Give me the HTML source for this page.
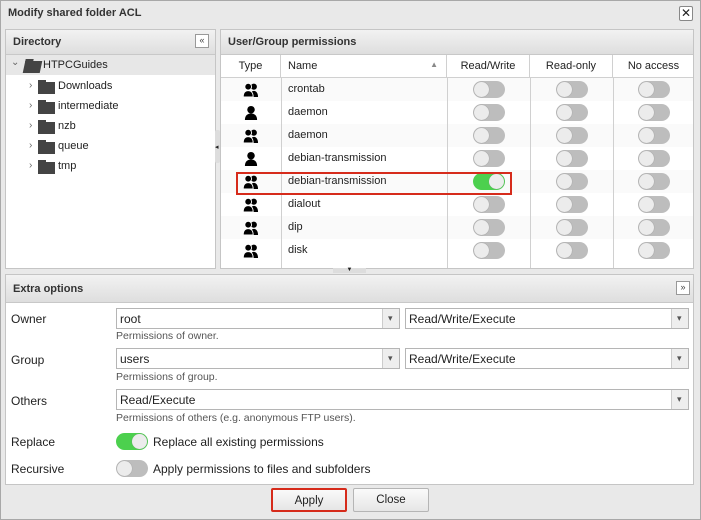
<!DOCTYPE html>
<html><head><meta charset="utf-8"><style>
*{box-sizing:border-box;margin:0;padding:0}
body{width:701px;height:520px;background:#e6e6e6;font-family:"Liberation Sans",sans-serif;font-size:11px;color:#222;position:relative;overflow:hidden}
.a{position:absolute}
.win{left:0;top:0;width:701px;height:520px;border:1px solid #a8a8a8;background:#e9e9e9}
.panel{background:#fff;border:1px solid #c5c5c5}
.ph{position:absolute;left:0;right:0;top:0;height:25px;background:linear-gradient(#f2f2f2,#dedede);border-bottom:1px solid #c8c8c8;font-weight:bold;font-size:11px;padding:6px 0 0 7px;color:#333}
.row{position:absolute;left:0;width:472px;height:23px}
.tg{position:absolute;width:32px;height:17px;border-radius:9px;background:#bdbdbd}
.tg::after{content:"";position:absolute;left:1px;top:1px;width:15px;height:15px;border-radius:50%;background:#ececec;box-shadow:0 0 1px #888}
.tg.on{background:#4cd04e}.tg.on::after{left:16px}
.sel{position:absolute;height:21px;border:1px solid #b5b5b5;background:#fff;padding:3px 0 0 3px;font-size:12px}
.sel::after{content:"";position:absolute;right:0;top:0;width:16px;height:19px;border-left:1px solid #ccc;background:#eee}
.arr{position:absolute;right:4px;top:6px;width:7px;height:7px;z-index:2;font-size:9px;line-height:7px;color:#555}
.lbl{position:absolute;left:11px;font-size:12px}
.hint{position:absolute;left:116px;font-size:10.5px;color:#555}
.btn{position:absolute;top:488px;height:24px;width:76px;border:1px solid #b5b5b5;border-radius:2px;background:linear-gradient(#fafafa,#e6e6e6);text-align:center;padding-top:5px;font-size:11.5px}
.fold{position:absolute;width:17px;height:12px;background:#444}
.fold::before{content:"";position:absolute;left:0;top:-2px;width:8px;height:3px;background:#444}
.ch{position:absolute;left:23px;font-size:10px;color:#666}
.tx{position:absolute;left:52px;font-size:11px}
.th{position:absolute;top:0;height:22px;border-right:1px solid #d0d0d0;text-align:center;padding-top:5px;font-size:11px}
</style></head><body>
<div class="a win"></div>
<div class="a" style="left:8px;top:7px;font-weight:bold;font-size:11px;color:#333">Modify shared folder ACL</div>
<div class="a" style="left:679px;top:6px;width:14px;height:15px;border:1px solid #888;border-radius:2px;background:#fff;font-size:12px;line-height:12px;text-align:center">✕</div>

<!-- directory -->
<div class="a panel" style="left:5px;top:29px;width:211px;height:240px">
<div class="ph">Directory</div>
<div class="a" style="left:189px;top:4px;width:14px;height:14px;border:1px solid #999;background:#fff;font-size:9px;line-height:11px;text-align:center;color:#444">«</div>
<div class="a" style="left:0;top:25px;width:209px;height:20px;background:#e7e7e7"></div>
<div class="a" style="left:5px;top:27px;font-size:10px;color:#666">⌄</div>
<div class="fold" style="left:18px;top:31px;height:12px;transform:skewX(-12deg)"></div>
<div class="tx" style="left:37px;top:29px">HTPCGuides</div>
<div class="ch" style="top:50px">›</div><div class="fold" style="left:32px;top:52px"></div><div class="tx" style="top:50px">Downloads</div>
<div class="ch" style="top:70px">›</div><div class="fold" style="left:32px;top:72px"></div><div class="tx" style="top:70px">intermediate</div>
<div class="ch" style="top:90px">›</div><div class="fold" style="left:32px;top:92px"></div><div class="tx" style="top:90px">nzb</div>
<div class="ch" style="top:110px">›</div><div class="fold" style="left:32px;top:112px"></div><div class="tx" style="top:110px">queue</div>
<div class="ch" style="top:130px">›</div><div class="fold" style="left:32px;top:132px"></div><div class="tx" style="top:130px">tmp</div>
</div>
<div class="a" style="left:215px;top:130px;width:5px;height:33px;background:#ddd;border-radius:2px"></div>
<div class="a" style="left:215px;top:143px;font-size:7px">◂</div>

<!-- permissions -->
<div class="a panel" style="left:220px;top:29px;width:474px;height:240px;overflow:hidden">
<div class="ph">User/Group permissions</div>
<div class="a" style="left:0;top:25px;width:472px;height:23px;background:#fff;border-bottom:1px solid #d0d0d0">
<div class="th" style="left:0;width:60px">Type</div>
<div class="th" style="left:60px;width:166px;text-align:left;padding-left:7px">Name<span style="position:absolute;right:8px;top:5px;font-size:8px;color:#888">▲</span></div>
<div class="th" style="left:226px;width:83px">Read/Write</div>
<div class="th" style="left:309px;width:83px">Read-only</div>
<div class="th" style="left:392px;width:81px;border:0">No access</div>
</div>
<div id="rows"></div>
<div class="a" style="left:60px;top:48px;width:1px;height:200px;background:#d0d0d0"></div>
<div class="a" style="left:226px;top:48px;width:1px;height:200px;background:#d0d0d0"></div>
<div class="a" style="left:309px;top:48px;width:1px;height:200px;background:#d0d0d0"></div>
<div class="a" style="left:392px;top:48px;width:1px;height:200px;background:#d0d0d0"></div>
</div>
<div class="a" style="left:236px;top:172px;width:276px;height:23px;border:2px solid #d62b1b"></div>
<div class="a" style="left:333px;top:268px;width:33px;height:5px;background:#ddd;font-size:6px;text-align:center;line-height:5px">▼</div>

<!-- extra -->
<div class="a panel" style="left:5px;top:274px;width:689px;height:211px">
<div class="ph" style="height:28px;padding-top:8px">Extra options</div>
<div class="a" style="left:670px;top:6px;width:14px;height:14px;border:1px solid #999;background:#fff;font-size:9px;line-height:11px;text-align:center;color:#444">»</div>
</div>
<div class="lbl" style="top:312px">Owner</div>
<div class="sel" style="left:116px;top:308px;width:284px">root<span class="arr">▾</span></div>
<div class="sel" style="left:405px;top:308px;width:284px">Read/Write/Execute<span class="arr">▾</span></div>
<div class="hint" style="top:330px">Permissions of owner.</div>
<div class="lbl" style="top:353px">Group</div>
<div class="sel" style="left:116px;top:348px;width:284px">users<span class="arr">▾</span></div>
<div class="sel" style="left:405px;top:348px;width:284px">Read/Write/Execute<span class="arr">▾</span></div>
<div class="hint" style="top:371px">Permissions of group.</div>
<div class="lbl" style="top:394px">Others</div>
<div class="sel" style="left:116px;top:389px;width:573px">Read/Execute<span class="arr">▾</span></div>
<div class="hint" style="top:412px">Permissions of others (e.g. anonymous FTP users).</div>
<div class="lbl" style="top:435px">Replace</div>
<div class="tg on" style="left:116px;top:433px"></div>
<div class="a" style="left:153px;top:435px;font-size:12px">Replace all existing permissions</div>
<div class="lbl" style="top:462px">Recursive</div>
<div class="tg" style="left:116px;top:460px"></div>
<div class="a" style="left:153px;top:462px;font-size:12px">Apply permissions to files and subfolders</div>

<div class="btn" style="left:271px;border:2px solid #d62b1b">Apply</div>
<div class="btn" style="left:353px">Close</div>

<svg width="0" height="0" style="position:absolute"><defs>
<symbol id="u" viewBox="0 0 16 16"><circle cx="8" cy="5" r="4"/><path d="M1.5 16c0-5 3-7 6.5-7s6.5 2 6.5 7z"/></symbol>
<symbol id="g" viewBox="0 0 16 16"><circle cx="11" cy="5" r="3.3"/><path d="M7 16c0-4.5 1.8-6.5 4-6.5s4.5 2 4.5 6.5z"/><circle cx="5" cy="5" r="3.6" stroke="#fff" stroke-width="1"/><path d="M-0.3 16c0-4.5 2.2-6.8 5.3-6.8s5.3 2.3 5.3 6.8z" stroke="#fff" stroke-width="1"/></symbol>
</defs></svg>
<script>
var d=[["g","crontab"],["u","daemon"],["g","daemon"],["u","debian-transmission"],["g","debian-transmission",1],["g","dialout"],["g","dip"],["g","disk"]];
var h="";d.forEach(function(r,i){var t=48+i*23;
h+='<div class="row" style="top:'+t+'px;background:'+(i%2?'#fff':'#fafafa')+'">'+
'<svg style="position:absolute;left:22px;top:4px" width="16" height="15"><use href="#'+r[0]+'"/></svg>'+
'<div style="position:absolute;left:67px;top:5px;font-size:11px">'+r[1]+'</div>'+
'<div class="tg'+(r[2]?' on':'')+'" style="left:252px;top:3px"></div><div class="tg" style="left:335px;top:3px"></div><div class="tg" style="left:417px;top:3px"></div></div>';});
document.getElementById("rows").outerHTML=h;
</script>
</body></html>
